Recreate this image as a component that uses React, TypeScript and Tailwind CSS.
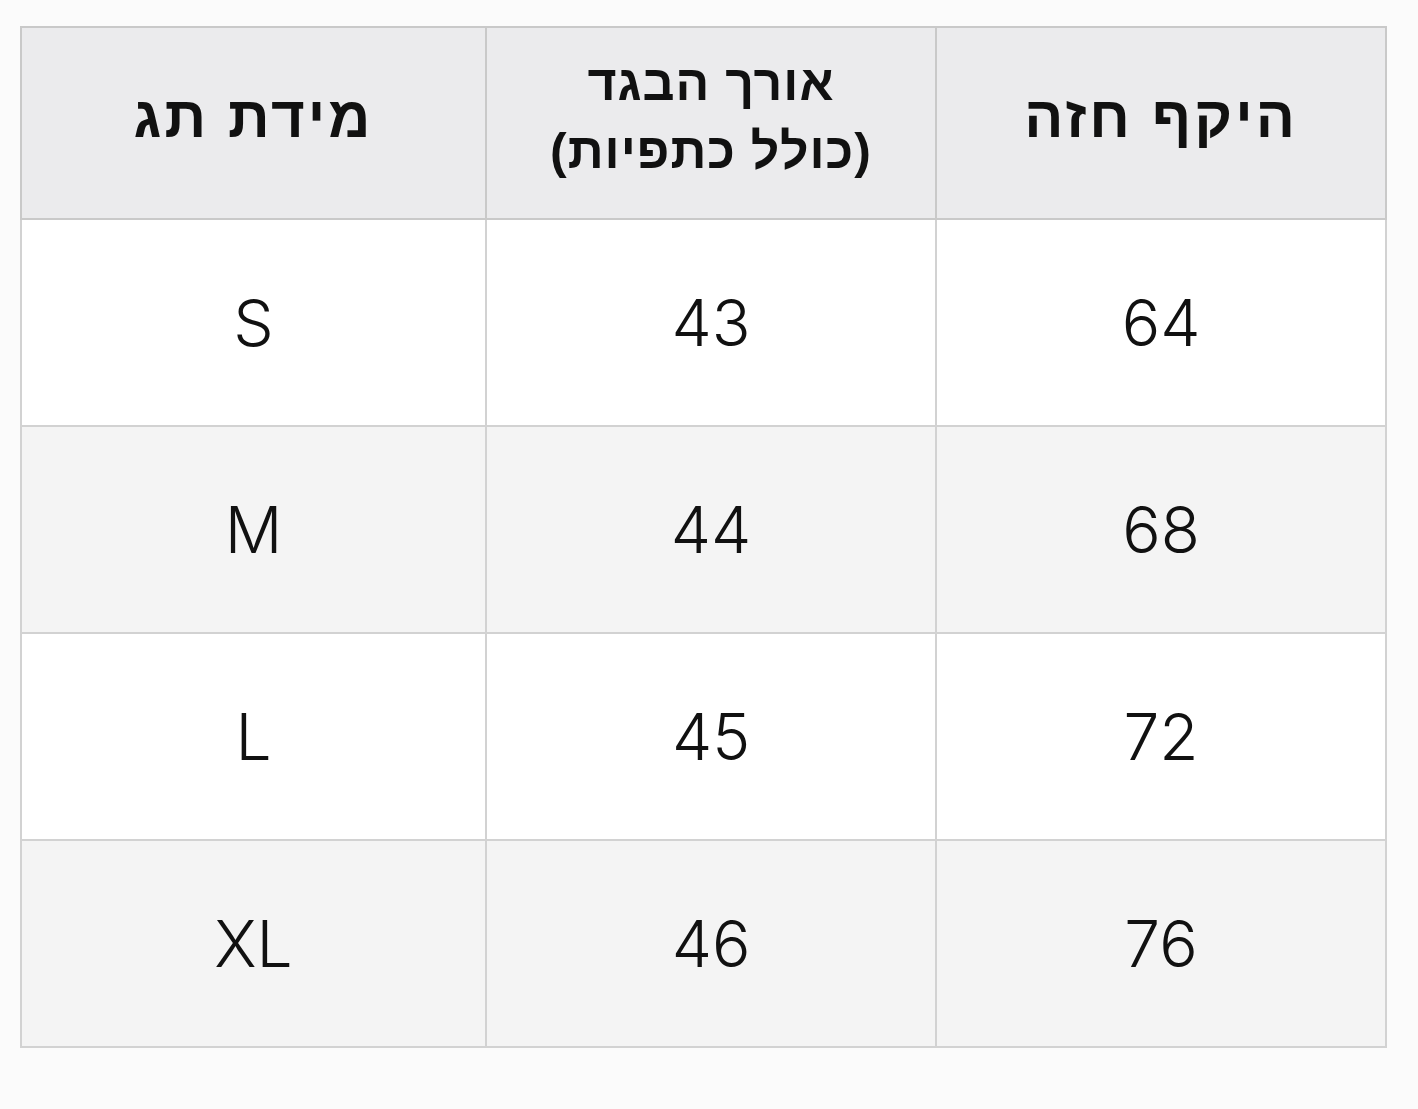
const headers = [
  { lines: ["היקף חזה"], width: "w-[450px]", size: "text-[58px] leading-[68px] tracking-[3px]" },
  { lines: ["אורך הבגד", "(כולל כתפיות)"], width: "w-[450px]", size: "text-[50px] leading-[68px] tracking-[1px]" },
  { lines: ["מידת תג"], width: "", size: "text-[58px] leading-[68px] tracking-[3px]" },
];

const rows = [
  ["64", "43", "S"],
  ["68", "44", "M"],
  ["72", "45", "L"],
  ["76", "46", "XL"],
];

export default function App() {
  return (
    <div className="min-h-[1109px] w-[1418px] bg-[#fbfbfb] pt-[26px] pl-[20px]">
      <table
        dir="rtl"
        className="w-[1367px] table-fixed border-collapse border-2 border-[#c9c9c9]"
      >
        <thead>
          <tr className="h-[192px] bg-[#ebebed]">
            {headers.map((h, i) => (
              <th
                key={i}
                className={`${h.width} ${h.size} border-2 border-[#c9c9c9] p-0 pb-[12px] text-center align-middle font-bold text-[#111] [font-family:'Liberation_Sans',Arial,sans-serif]`}
              >
                {h.lines.map((l, j) => (
                  <div key={j}>{l}</div>
                ))}
              </th>
            ))}
          </tr>
        </thead>
        <tbody>
          {rows.map((r, i) => (
            <tr key={i} className={`h-[207px] ${i % 2 === 0 ? "bg-white" : "bg-[#f4f4f4]"}`}>
              {r.map((c, j) => (
                <td
                  key={j}
                  className="border-2 border-[#d2d2d2] p-0 text-center align-middle text-[64px] font-light text-[#111] [font-family:Inter,'Liberation_Sans',sans-serif]"
                >
                  {c}
                </td>
              ))}
            </tr>
          ))}
        </tbody>
      </table>
    </div>
  );
}
